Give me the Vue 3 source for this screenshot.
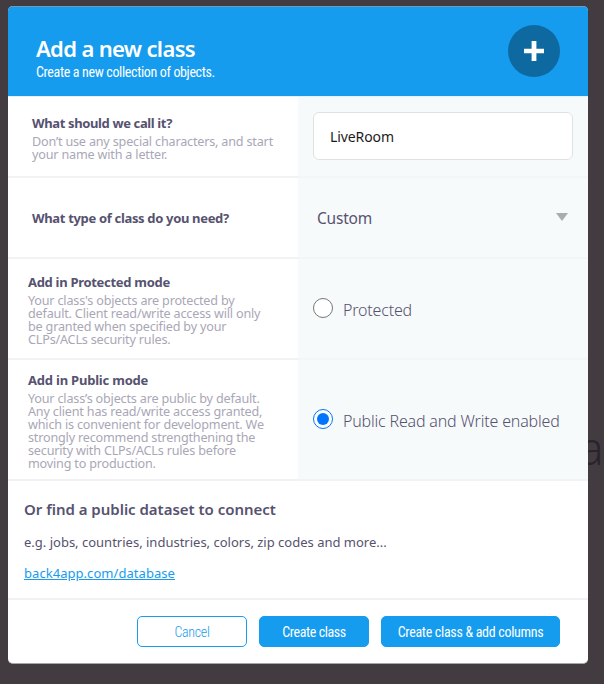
<script setup>
import { ref } from 'vue'

const name = ref('LiveRoom')
const mode = ref('public')
</script>

<template>
  <div class="page">
    <span class="backdrop-text">a</span>
    <div class="modal">
      <header class="header">
        <div>
          <h1>Add a new class</h1>
          <p class="sub">Create a new collection of objects.</p>
        </div>
        <div class="badge-plus">
          <svg width="20" height="20" viewBox="0 0 20 20"><path d="M7.6 0h4.8v7.8H20v4.4h-7.6V20H7.6v-7.8H0V7.8h7.6z" fill="#fff" /></svg>
        </div>
      </header>

      <section class="row row-name">
        <div class="label">
          <h2 class="q-name">What should we call it?</h2>
          <p class="desc">Don’t use any special characters, and start<br />your name with a letter.</p>
        </div>
        <div class="field"><input v-model="name" class="input" type="text" /></div>
      </section>

      <section class="row row-type">
        <div class="label type"><h2 class="q-type">What type of class do you need?</h2></div>
        <div class="field select">
          <span class="custom">Custom</span>
          <svg width="12" height="8" viewBox="0 0 12 8"><path d="M0 0h12L6 8z" fill="#a9adad" /></svg>
        </div>
      </section>

      <section class="row row-protected">
        <div class="label tight">
          <h2 class="q-mode">Add in Protected mode</h2>
          <p class="desc">Your class's objects are protected by<br />default. Client read/write access will only<br />be granted when specified by your<br />CLPs/ACLs security rules.</p>
        </div>
        <label class="field option" @click="mode = 'protected'">
          <span class="radio" :class="{ on: mode === 'protected' }"></span>
          <span class="option-text">Protected</span>
        </label>
      </section>

      <section class="row row-public">
        <div class="label tight">
          <h2 class="q-mode pub">Add in Public mode</h2>
          <p class="desc">Your class’s objects are public by default.<br />Any client has read/write access granted,<br />which is convenient for development. We<br />strongly recommend strengthening the<br />security with CLPs/ACLs rules before<br />moving to production.</p>
        </div>
        <label class="field option" @click="mode = 'public'">
          <span class="radio" :class="{ on: mode === 'public' }"></span>
          <span class="option-text">Public Read and Write enabled</span>
        </label>
      </section>

      <section class="dataset">
        <h3>Or find a public dataset to connect</h3>
        <p class="examples">e.g. jobs, countries, industries, colors, zip codes and more...</p>
        <a class="link">back4app.com/database</a>
      </section>

      <footer class="footer">
        <button class="btn cancel">Cancel</button>
        <button class="btn create">Create class</button>
        <button class="btn columns">Create class &amp; add columns</button>
      </footer>
    </div>
  </div>
</template>

<style>
body { background: #423c40; }
</style>

<style scoped>
* { box-sizing: border-box; margin: 0; }
.page { position: relative; width: 604px; height: 684px; padding: 6px 16px 0 8px; overflow: hidden; background: #423c40; font-family: "Noto Sans", sans-serif; color: #56526f; }
.backdrop-text { position: absolute; left: 579px; top: 420px; font-size: 46px; line-height: 54px; font-weight: 300; color: #29232e; }
.modal { position: relative; display: flex; flex-direction: column; width: 580px; height: 658px; border-radius: 5px; overflow: hidden; background: #fff; border-bottom: 1px solid #a8a6a8; }
.header { display: flex; justify-content: space-between; flex: none; height: 90px; padding: 18px 28px 0 28px; background: #169cee; color: #fff; border-top: 1px solid #6b9cbe; }
h1 { margin-top: 8px; font-size: 22px; line-height: 30px; font-weight: 600; letter-spacing: -0.66px; }
.sub { margin-top: 1px; font: 400 14px/17px Roboto, sans-serif; font-stretch: 75%; letter-spacing: -0.35px; }
.badge-plus { display: flex; align-items: center; justify-content: center; width: 52px; height: 52px; border-radius: 50%; background: #0e69a1; }
.row { display: grid; flex: none; grid-template-columns: 290px 290px; }
.row-name { height: 82px; border-top: 1px solid #e2f2fc; }
.row-type { height: 81px; }
.row-protected { height: 101px; }
.row-public { height: 121px; }
.label { display: flex; flex-direction: column; justify-content: center; padding: 2px 0 0 24px; white-space: nowrap; border-bottom: 2px solid #f2f2f4; }
.label.type { padding-top: 0; }
.label.tight { padding-left: 20px; }
.row-public .label { padding-top: 1px; }
h2 { font-size: 13px; line-height: 18px; font-weight: 700; letter-spacing: -0.37px; }
.q-type { letter-spacing: -0.33px; }
.q-mode { letter-spacing: -0.3px; }
.pub { letter-spacing: -0.21px; }
.desc { padding-top: 3px; font-size: 12.6px; line-height: 13px; letter-spacing: -0.18px; color: #a9a7b6; }
.field { display: flex; align-items: center; padding-left: 15px; background: #f6fafb; border-bottom: 2px solid #f1f4f5; }
.row-name .field, .row-type .field, .row-protected .field { border-bottom-color: #f3f6f7; }
.input { width: 260px; height: 48px; margin-bottom: 2px; padding: 1px 16px 0; border: 1px solid #dfe2e3; border-radius: 6px; background: #fff; color: #1b1b1b; font: 400 14px "Noto Sans", sans-serif; letter-spacing: -0.1px; outline: none; }
.select { justify-content: space-between; padding: 0 20px 0 19px; }
.select svg { margin-top: -1px; }
.custom { padding-top: 1px; font-size: 15.5px; font-weight: 370; letter-spacing: -0.2px; }
.option { gap: 10px; padding-bottom: 1px; }
.radio { display: flex; width: 20px; height: 20px; border: 1px solid #767676; border-radius: 50%; background: #fff; }
.radio.on { align-items: center; justify-content: center; border-color: #0075ff; }
.radio.on::after { content: ""; width: 12px; height: 12px; border-radius: 50%; background: #0075ff; }
.option-text { font-size: 16px; line-height: 22px; font-weight: 350; letter-spacing: -0.18px; padding-top: 3px; white-space: nowrap; }
.dataset { display: flex; flex: none; flex-direction: column; align-items: flex-start; height: 119px; padding: 17px 16px 0; border-bottom: 2px solid #f1f1f3; }
h3 { font-size: 15px; line-height: 22px; font-weight: 600; letter-spacing: -0.02px; }
.examples { margin-top: 12px; font-size: 13px; line-height: 20px; }
.link { margin-top: 11px; font-size: 13px; line-height: 20px; letter-spacing: 0.05px; color: #169cee; text-decoration: underline; }
.footer { display: flex; justify-content: flex-end; gap: 12px; padding: 16px 28px 0 0; }
.btn { height: 31px; padding: 0; border: 1px solid #169cee; border-radius: 5px; background: #169cee; color: #fff; font: 400 14px Roboto, sans-serif; font-stretch: 75%; letter-spacing: -0.3px; }
.cancel { width: 110px; background: #fff; color: #169cee; font-weight: 300; }
.create { width: 110px; letter-spacing: -0.42px; }
.columns { width: 179px; }
</style>
